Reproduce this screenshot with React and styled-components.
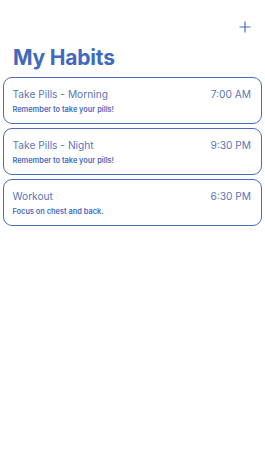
import React from 'react'
import styled, { createGlobalStyle } from 'styled-components'

const GlobalStyle = createGlobalStyle`
  html, body {
    margin: 0;
    padding: 0;
    background: #ffffff;
  }
  body {
    font-family: Inter, "Liberation Sans", sans-serif;
    -webkit-font-smoothing: antialiased;
  }
`

const Screen = styled.div`
  width: 265px;
  min-height: 471px;
  box-sizing: border-box;
  background: #ffffff;
`

const Header = styled.div`
  display: flex;
  flex-direction: column;
  padding: 21px 14px 0 13px;
`

const TopBar = styled.div`
  display: flex;
  justify-content: flex-end;
  height: 12px;
`

const AddButton = styled.button`
  width: 12px;
  height: 12px;
  padding: 0;
  border: none;
  background: none;
  display: flex;
  cursor: pointer;
`

const Title = styled.h1`
  margin: 12px 0 0 0;
  font-size: 21px;
  line-height: 26px;
  font-weight: 700;
  color: #4169bf;
  letter-spacing: -0.2px;
`

const List = styled.div`
  display: flex;
  flex-direction: column;
  gap: 4px;
  padding: 6px 3px 0 3px;
`

const Card = styled.div`
  height: 47px;
  box-sizing: border-box;
  border: 1.5px solid #4a6cbf;
  border-radius: 9px;
  padding: 9px 10px 0 8.5px;
`

const Row = styled.div`
  display: flex;
  justify-content: space-between;
  align-items: center;
  height: 14px;
`

const Name = styled.span`
  font-size: 10.2px;
  color: #5a77b8;
`

const Time = styled.span`
  font-size: 10.2px;
  color: #5a77b8;
`

const Note = styled.div`
  margin-top: 3.5px;
  font-size: 7.4px;
  line-height: 10px;
  font-weight: 600;
  color: #4a6cbf;
`

const PlusIcon = () => (
  <svg width="12" height="12" viewBox="0 0 12 12">
    <path d="M6 0.5V11.5M0.5 6H11.5" stroke="#4a6cbf" strokeWidth="1.2" />
  </svg>
)

const habits = [
  { name: 'Take Pills - Morning', time: '7:00 AM', note: 'Remember to take your pills!' },
  { name: 'Take Pills - Night', time: '9:30 PM', note: 'Remember to take your pills!' },
  { name: 'Workout', time: '6:30 PM', note: 'Focus on chest and back.' }
]

export default function App() {
  return (
    <Screen>
      <GlobalStyle />
      <Header>
        <TopBar>
          <AddButton aria-label="Add habit">
            <PlusIcon />
          </AddButton>
        </TopBar>
        <Title>My Habits</Title>
      </Header>
      <List>
        {habits.map(h => (
          <Card key={h.name}>
            <Row>
              <Name>{h.name}</Name>
              <Time>{h.time}</Time>
            </Row>
            <Note>{h.note}</Note>
          </Card>
        ))}
      </List>
    </Screen>
  )
}
